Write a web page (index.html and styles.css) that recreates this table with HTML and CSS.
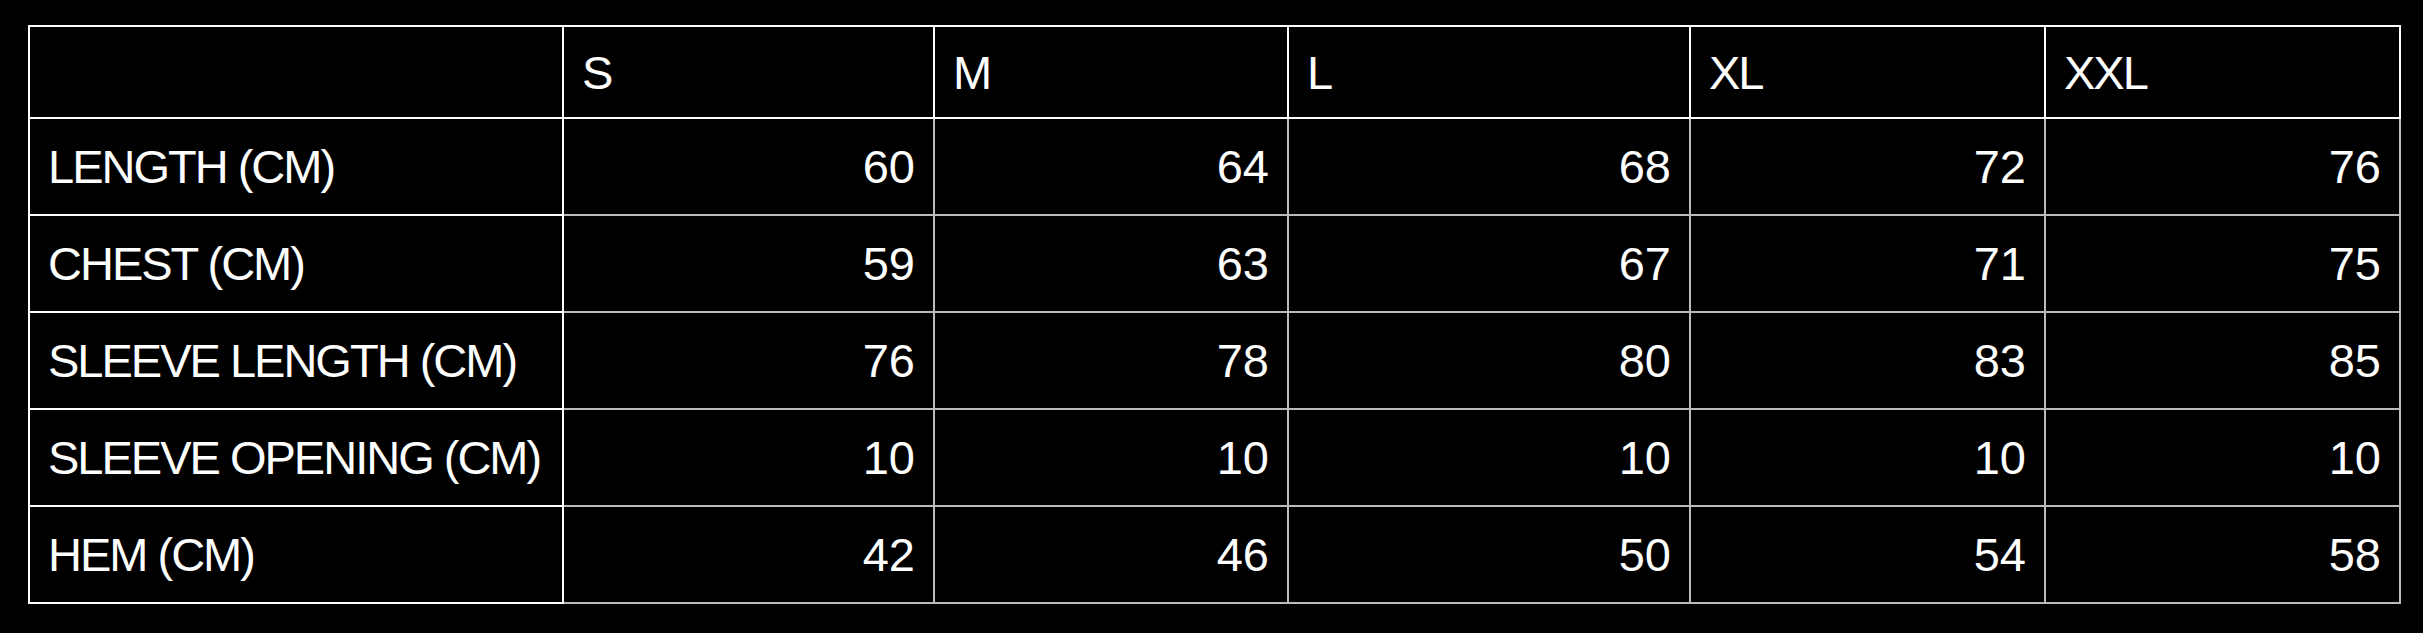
FILE: index.html
```html
<!DOCTYPE html>
<html lang="en">
<head>
<meta charset="utf-8">
<title>Size chart</title>
<link rel="stylesheet" href="styles.css">
</head>
<body>
<table class="size-table">
  <colgroup>
    <col class="col-label">
    <col class="col-s">
    <col class="col-m">
    <col class="col-l">
    <col class="col-xl">
    <col class="col-xxl">
  </colgroup>
  <thead>
    <tr class="head-row">
      <th class="corner"></th>
      <th class="size">S</th>
      <th class="size">M</th>
      <th class="size">L</th>
      <th class="size">XL</th>
      <th class="size">XXL</th>
    </tr>
  </thead>
  <tbody>
    <tr>
      <th class="label">LENGTH (CM)</th>
      <td>60</td><td>64</td><td>68</td><td>72</td><td>76</td>
    </tr>
    <tr>
      <th class="label">CHEST (CM)</th>
      <td>59</td><td>63</td><td>67</td><td>71</td><td>75</td>
    </tr>
    <tr>
      <th class="label">SLEEVE LENGTH (CM)</th>
      <td>76</td><td>78</td><td>80</td><td>83</td><td>85</td>
    </tr>
    <tr>
      <th class="label">SLEEVE OPENING (CM)</th>
      <td>10</td><td>10</td><td>10</td><td>10</td><td>10</td>
    </tr>
    <tr>
      <th class="label">HEM (CM)</th>
      <td>42</td><td>46</td><td>50</td><td>54</td><td>58</td>
    </tr>
  </tbody>
</table>
</body>
</html>
```
FILE: styles.css
```css
html, body {
  margin: 0;
  padding: 0;
  background: #000;
}

body {
  padding: 25px 0 0 28px;
  font-family: "Liberation Sans", Arial, Helvetica, sans-serif;
  color: #fff;
}

.size-table {
  table-layout: fixed;
  border-collapse: separate;
  border-spacing: 0;
  width: 2373px;
  border-left: 2px solid #fff;
  border-top: 2px solid #fff;
  font-size: 47px;
  line-height: normal;
}

.col-label { width: 534px; }
.col-s { width: 371px; }
.col-m { width: 354px; }
.col-l { width: 402px; }
.col-xl { width: 355px; }
.col-xxl { width: 355px; }

.size-table th,
.size-table td {
  box-sizing: border-box;
  height: 97px;
  padding: 0 18px;
  vertical-align: middle;
  font-weight: normal;
  white-space: nowrap;
}

.size-table th {
  text-align: left;
  border-right: 2px solid #fff;
  border-bottom: 2px solid #fff;
  letter-spacing: -2px;
}

.size-table td {
  text-align: right;
  border-right: 2px solid #bbb;
  border-bottom: 2px solid #bbb;
}

.head-row th {
  height: 92px;
}
```
